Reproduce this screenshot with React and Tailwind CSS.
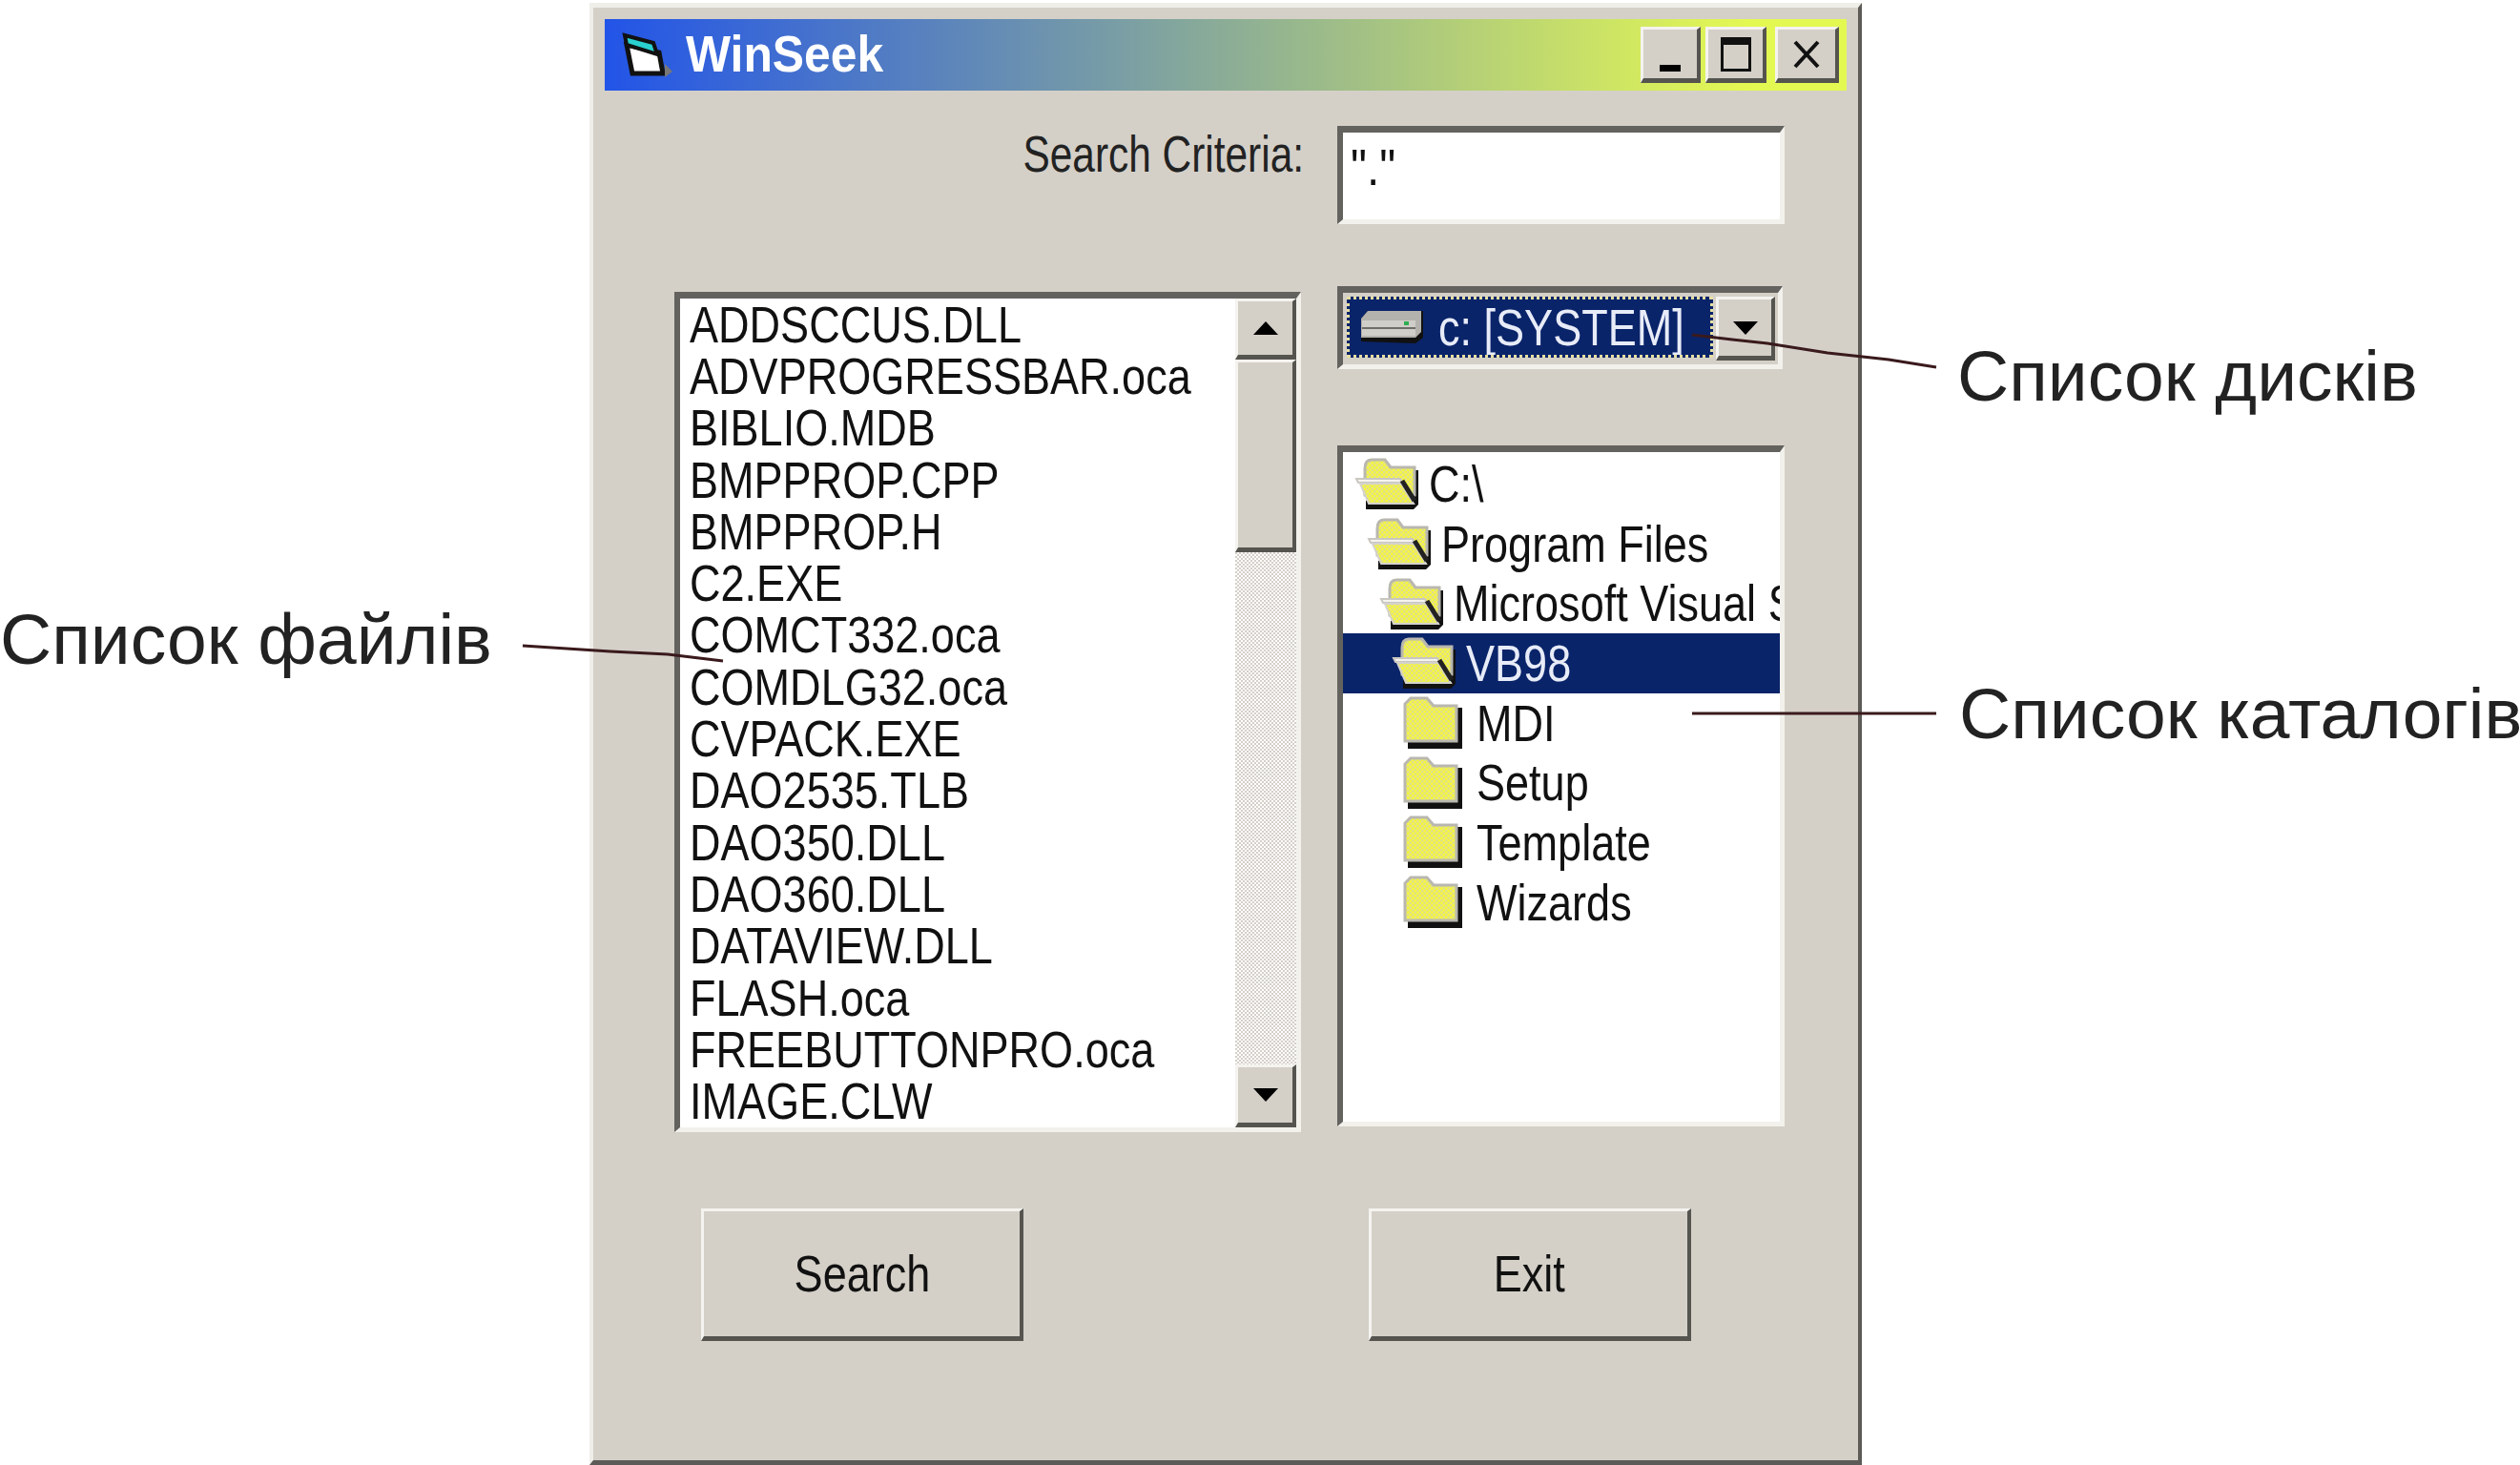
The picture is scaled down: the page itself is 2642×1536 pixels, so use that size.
import React from "react";

const files = [
  "ADDSCCUS.DLL",
  "ADVPROGRESSBAR.oca",
  "BIBLIO.MDB",
  "BMPPROP.CPP",
  "BMPPROP.H",
  "C2.EXE",
  "COMCT332.oca",
  "COMDLG32.oca",
  "CVPACK.EXE",
  "DAO2535.TLB",
  "DAO350.DLL",
  "DAO360.DLL",
  "DATAVIEW.DLL",
  "FLASH.oca",
  "FREEBUTTONPRO.oca",
  "IMAGE.CLW",
];

const dirs = [
  { name: "C:\\", pad: "pl-[12px]", open: true },
  { name: "Program Files", pad: "pl-[25px]", open: true },
  { name: "Microsoft Visual Studio", pad: "pl-[38px]", open: true },
  { name: "VB98", pad: "pl-[51px]", open: true, selected: true },
  { name: "MDI", pad: "pl-[62px]" },
  { name: "Setup", pad: "pl-[62px]" },
  { name: "Template", pad: "pl-[62px]" },
  { name: "Wizards", pad: "pl-[62px]" },
];

const Dither = ({ id }) => (
  <pattern id={id} width="5" height="5" patternUnits="userSpaceOnUse">
    <rect width="5" height="5" fill="#f6f63c" />
    <rect width="2.5" height="2.5" fill="#e0e08a" />
    <rect x="2.5" y="2.5" width="2.5" height="2.5" fill="#e0e08a" />
  </pattern>
);

const OpenFolder = ({ id }) => (
  <svg width="68" height="56" viewBox="0 0 68 56" className="shrink-0">
    <defs>
      <Dither id={id} />
    </defs>
    <path d="M12 55 L62 55 L67 50 L67 14 L56 14 L40 44 L12 46 Z" fill="#111" />
    <path d="M11 12 Q11 3 18 3 L32 3 L38 11 L63 11 L63 40 L11 40 Z" fill={`url(#${id})`} stroke="#b9b7b0" strokeWidth="3" />
    <path d="M2 23 L48 23 L50 27 L4 27 Z" fill="#f4f3ee" stroke="#c9c7c0" strokeWidth="2" />
    <path d="M6 28 L49 28 L62 49 L15 49 Z" fill={`url(#${id})`} stroke="#d4d2cc" strokeWidth="2" />
    <path d="M50 25 L63 46" stroke="#222" strokeWidth="5" />
  </svg>
);

const ClosedFolder = ({ id }) => (
  <svg width="64" height="56" viewBox="0 0 64 56" className="shrink-0">
    <defs>
      <Dither id={id} />
    </defs>
    <path d="M6 55 L63 55 L63 12 L57 12 L57 46 L6 46 Z" fill="#111" />
    <path d="M3 47 L3 8 L9 2 L26 2 L33 10 L57 10 L57 47 Z" fill={`url(#${id})`} stroke="#b9b7b0" strokeWidth="3" />
  </svg>
);

const Arrow = ({ up }) => (
  <svg width="28" height="16" viewBox="0 0 28 16">
    <path d={up ? "M14 1 L27 15 L1 15 Z" : "M1 1 L27 1 L14 15 Z"} fill="#000" />
  </svg>
);

const raised =
  "bg-[#d4d0c8] border-t-[3px] border-l-[3px] border-b-[5px] border-r-[4px] border-t-[#f4f3ef] border-l-[#f4f3ef] border-b-[#55544f] border-r-[#55544f]";
const sunken =
  "border-t-[7px] border-l-[6px] border-b-[5px] border-r-[5px] border-t-[#63625e] border-l-[#63625e] border-b-[#f2f1ec] border-r-[#f2f1ec]";

export default function App() {
  return (
    <div className="relative w-[2642px] h-[1536px] overflow-hidden bg-white font-['Liberation_Sans',Arial,sans-serif] text-[53px] leading-none text-[#111]">
      <div className="ml-[618px] pt-[3px]">
        {/* window */}
        <div className="w-[1334px] h-[1533px] flex flex-col bg-[#d4d0c8] border-t-[5px] border-l-[4px] border-r-[4px] border-b-[5px] border-t-[#efeee9] border-l-[#efeee9] border-r-[#5c5b57] border-b-[#5c5b57] pt-[12px] px-[12px]">
          {/* title bar */}
          <div className="h-[75px] flex items-center bg-linear-to-r/srgb from-[#2254e8] to-[#e4f852] to-[92%] shrink-0">
            <svg width="56" height="50" viewBox="0 0 56 50" className="ml-[17px] shrink-0">
              <path d="M6 14 L40 22 L44 44 L12 44 Z" fill="#fff" stroke="#111" strokeWidth="5" />
              <path d="M4 4 L34 12 L38 24 L6 14 Z" fill="#2ad0d0" stroke="#111" strokeWidth="4" />
              <path d="M46 34 L54 42 L46 48 Z" fill="#777" />
            </svg>
            <span className="ml-[12px] -mt-[2px] font-bold text-white inline-block origin-left scale-x-[0.94]">WinSeek</span>
            <div className="ml-auto mr-[8px] flex items-center">
              <div className={`w-[63px] h-[59px] flex items-end justify-center pb-[7px] ${raised}`}>
                <div className="w-[22px] h-[7px] bg-black" />
              </div>
              <div className={`ml-[5px] w-[64px] h-[59px] flex items-center justify-center ${raised}`}>
                <div className="w-[32px] h-[36px] border-[3px] border-t-[8px] border-[#111]" />
              </div>
              <div className={`ml-[9px] w-[67px] h-[59px] flex items-center justify-center ${raised}`}>
                <svg width="30" height="32" viewBox="0 0 30 32">
                  <path d="M3 3 L27 29 M27 3 L3 29" stroke="#111" strokeWidth="4" />
                </svg>
              </div>
            </div>
          </div>

          {/* search criteria */}
          <div className="mt-[37px] flex items-start shrink-0">
            <span className="w-[733px] mt-[3px] text-right inline-block origin-right scale-x-[0.8] text-[#222]">Search Criteria:</span>
            <div className={`ml-[35px] w-[469px] h-[103px] bg-white pl-[8px] pt-[10px] text-[#111] ${sunken}`}>
              <span className="inline-block origin-left scale-x-[0.9]">"."</span>
            </div>
          </div>

          {/* lists */}
          <div className="mt-[65px] flex items-start pl-[73px] shrink-0">
            <div className={`mt-[6px] w-[657px] h-[881px] bg-white flex ${sunken}`}>
              <div className="flex-1 overflow-hidden pl-[10px]">
                {files.map((f) => (
                  <div key={f} className="h-[54.3px] flex items-center whitespace-nowrap">
                    <span className="inline-block origin-left scale-x-[0.85]">{f}</span>
                  </div>
                ))}
              </div>
              <div className="w-[64px] flex flex-col bg-[repeating-conic-gradient(#d4d0c8_0_25%,#ffffff_0_50%)] bg-size-[4px_4px]">
                <div className={`h-[64px] flex items-center justify-center shrink-0 ${raised}`}>
                  <Arrow up />
                </div>
                <div className={`h-[202px] shrink-0 ${raised}`} />
                <div className={`mt-auto h-[66px] flex items-center justify-center shrink-0 ${raised}`}>
                  <Arrow />
                </div>
              </div>
            </div>

            <div className="ml-[38px] w-[469px]">
              {/* drive combo */}
              <div className={`w-[467px] h-[87px] flex bg-[#d4d0c8] pt-[4px] pl-[4px] ${sunken}`}>
                <div className="w-[384px] h-[64px] flex items-center bg-[#0a246a] border-[3px] border-dotted border-[#e6dfa0] text-[#e8ecf8] overflow-hidden">
                  <svg width="70" height="38" viewBox="0 0 70 38" className="ml-[9px] shrink-0">
                    <path d="M3 34 L3 10 L10 2 L68 2 L68 30 L60 36 Z" fill="#111" />
                    <path d="M3 10 L10 2 L66 2 L66 24 L60 30 L3 30 Z" fill="#b4b2ac" />
                    <path d="M4 12 L60 12 L60 28 L4 28 Z" fill="#d0cec8" />
                    <path d="M4 20 L60 20" stroke="#6f6d67" strokeWidth="2" />
                    <rect x="48" y="13" width="5" height="4" fill="#2fae4f" />
                  </svg>
                  <span className="ml-[14px] whitespace-nowrap inline-block origin-left scale-x-[0.85]">c: [SYSTEM]</span>
                </div>
                <div className={`ml-[3px] w-[62px] h-[67px] flex items-center justify-center ${raised}`}>
                  <Arrow />
                </div>
              </div>

              {/* directory list */}
              <div className={`mt-[80px] h-[714px] bg-white overflow-hidden pt-[2px] ${sunken}`}>
                {dirs.map((d, i) => (
                  <div
                    key={d.name}
                    className={`h-[62.7px] flex items-center whitespace-nowrap ${d.pad} ${d.selected ? "bg-[#0a246a] text-[#e8ecf8]" : ""}`}
                  >
                    {d.open ? <OpenFolder id={`dither${i}`} /> : <ClosedFolder id={`dither${i}`} />}
                    <span className={`inline-block origin-left scale-x-[0.85] ${d.open ? "ml-[10px]" : "ml-[14px]"}`}>{d.name}</span>
                  </div>
                ))}
              </div>
            </div>
          </div>

          {/* buttons */}
          <div className="mt-[80px] flex pl-[101px]">
            <div className={`w-[338px] h-[139px] flex items-center justify-center ${raised}`}>
              <span className="inline-block scale-x-[0.85]">Search</span>
            </div>
            <div className={`ml-[362px] w-[338px] h-[139px] flex items-center justify-center ${raised}`}>
              <span className="inline-block scale-x-[0.85]">Exit</span>
            </div>
          </div>
        </div>
      </div>

      {/* leader lines */}
      <svg className="absolute inset-0 pointer-events-none" width="2642" height="1536" viewBox="0 0 2642 1536">
        <g fill="none" stroke="#3a1a1c" strokeWidth="3">
          <path d="M548 677 L640 683 L700 686 L758 693" />
          <path d="M1774 351 L1816 356 L1853 360 L1916 370 L1980 377 L2030 385" />
          <path d="M1774 748 L2030 748" />
        </g>
      </svg>

      {/* callouts */}
      <span className="absolute left-0 top-[628px] text-[75px] leading-[84px] text-[#222] whitespace-nowrap">Список файлів</span>
      <span className="absolute left-[2052px] top-[352px] text-[75px] leading-[84px] text-[#222] whitespace-nowrap">Список дисків</span>
      <span className="absolute left-[2054px] top-[706px] text-[75px] leading-[84px] text-[#222] whitespace-nowrap">Список каталогів</span>
    </div>
  );
}
